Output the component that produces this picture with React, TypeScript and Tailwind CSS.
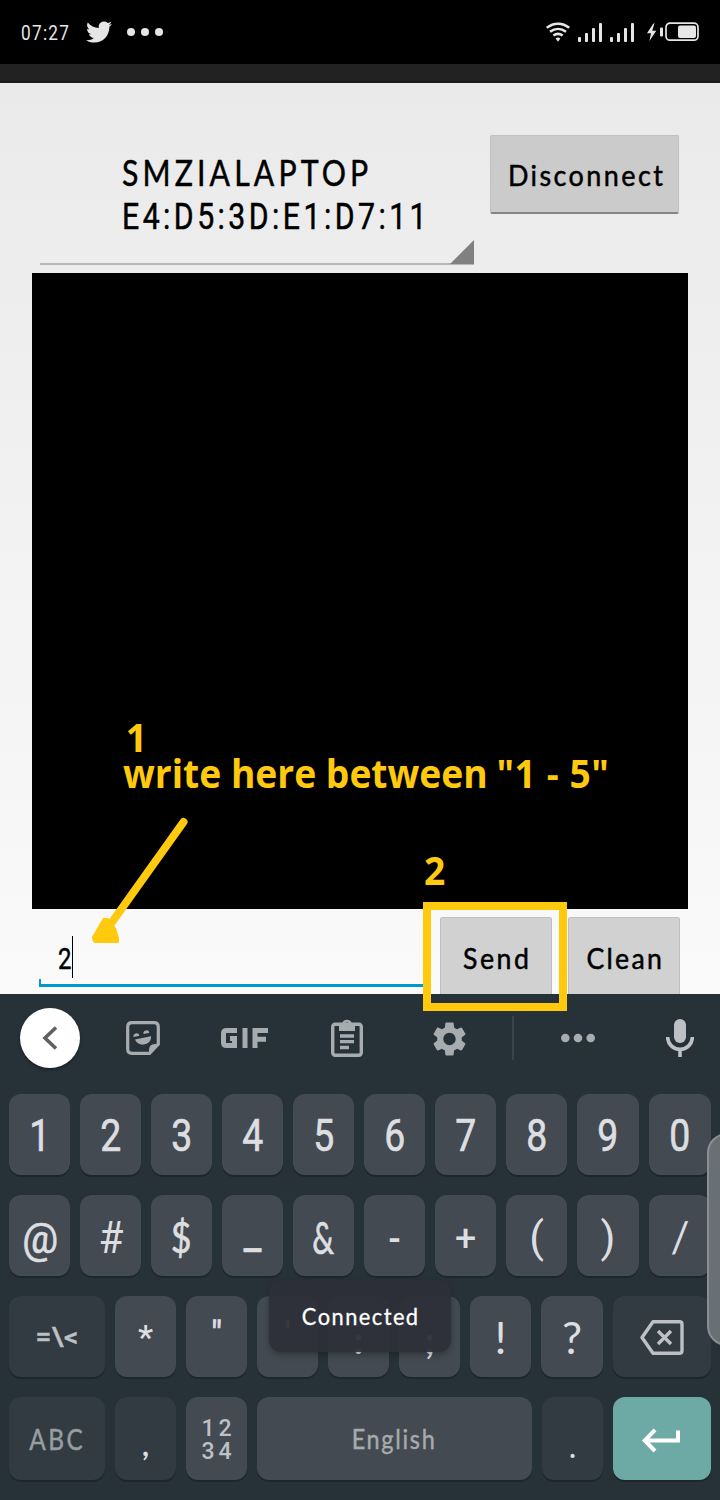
import React from "react";
import { FaTwitter } from "react-icons/fa";
import { MdSettings } from "react-icons/md";

function Glyph({ children, roboto = false, className = "" }: { children: React.ReactNode; roboto?: boolean; className?: string }) {
  return (
    <span className={`inline-block whitespace-pre ${roboto ? "font-['Roboto',sans-serif]" : "font-['Lato','Noto_Sans',sans-serif]"} leading-none ${className}`}>
      {children}
    </span>
  );
}

function Key({ children, dark = false }: { children?: React.ReactNode; dark?: boolean }) {
  return (
    <div className={`flex h-full min-w-0 items-center justify-center rounded-[12px] shadow-[0_2px_0_#1d262c] ${dark ? "bg-[#313b41]" : "bg-[#434a51]"}`}>
      {children}
    </div>
  );
}

function Signal() {
  return (
    <svg width="25" height="20" viewBox="0 0 25 20" fill="#e6e6e6">
      <rect x="0" y="14" width="3" height="5" rx="1" />
      <rect x="7" y="10" width="3" height="9" rx="1" />
      <rect x="14" y="5" width="3" height="14" rx="1" />
      <rect x="21" y="0" width="3" height="19" rx="1" />
    </svg>
  );
}

function StatusBar() {
  return (
    <div className="flex h-16 items-center bg-black pl-5 pr-[21px]">
      <Glyph roboto className="ml-px w-[65px] origin-left pt-px text-[20px] tracking-[1.5px] text-[#e6e6e6] scale-x-[0.86]">07:27</Glyph>
      <FaTwitter className="h-[26px] w-[26px]" color="#e6e6e6" />
      <svg className="ml-[15px]" width="38" height="10" viewBox="0 0 38 10" fill="#e6e6e6">
        <circle cx="4" cy="5" r="4" />
        <circle cx="18" cy="5" r="4" />
        <circle cx="32" cy="5" r="4" />
      </svg>
      <div className="ml-auto flex items-center">
        <svg width="24" height="20" viewBox="0 0 24 20" fill="none" stroke="#e6e6e6" strokeWidth="2.5">
          <path d="M.8 5.8C7.500.300 16.500.300 23.200 5.800" />
          <path d="M4 9.800c4.900-3.900 11.100-3.900 16 0" />
          <path d="M7.400 13.600c2.900-2.200 6.300-2.200 9.200 0" />
          <path d="M9.600 16.600q2.400-2 4.800 0L12 19.800z" fill="#e6e6e6" stroke="none" />
        </svg>
        <div className="ml-2 mt-px"><Signal /></div>
        <div className="ml-[7px] mt-px"><Signal /></div>
        <svg className="ml-3" width="52" height="20" viewBox="0 0 52 20">
          <path d="M6 2 0 11.300h4L2.400 19 9.300 8.800H5.200L7.600 1z" fill="#e6e6e6" />
          <rect x="13" y="5.500" width="3" height="9" rx="1" fill="#e6e6e6" />
          <rect x="19" y="1.200" width="32" height="17" rx="4" fill="none" stroke="#e6e6e6" strokeWidth="1.700" />
          <rect x="31" y="3.500" width="18" height="12.500" rx="2" fill="#e6e6e6" />
        </svg>
      </div>
    </div>
  );
}

function Toolbar() {
  return (
    <div className="flex h-[88px] items-center">
      <div className="w-[103px] pl-5">
        <div className="flex h-[60px] w-[60px] items-center justify-center rounded-full bg-white shadow-[0_2px_3px_#1a2227]">
          <svg width="16" height="24" viewBox="0 0 16 24" fill="none" stroke="#606060" strokeWidth="3.600">
            <path d="M14 1.500 3 12l11 10.500" />
          </svg>
        </div>
      </div>
      <div className="flex w-20 justify-center">
        <svg width="34" height="34" viewBox="0 0 34 34">
          <path d="M6 1.700h22q4.300 0 4.300 4.300v17L23.500 32.300H6Q1.700 32.300 1.700 28V6Q1.700 1.700 6 1.700z" fill="none" stroke="#a7acaf" strokeWidth="3.200" />
          <path d="M23 33.500V29q0-6 6-6h4.500z" fill="#a7acaf" />
          <path d="M9 18.500 25 15.300c.5 5-3.300 8-7.500 8.300-4 .3-7-1.700-8.500-5.100zM7.500 16a3 3 0 0 1 5.900-1.200zM17.500 13a3 3 0 0 1 5.900-1.200z" fill="#a7acaf" />
        </svg>
      </div>
      <div className="flex w-[122px] justify-center">
        <svg width="47" height="20" viewBox="0 0 47 20" fill="none" stroke="#a7acaf" strokeWidth="5">
          <path d="M16 2.500H5.500q-3 0-3 3v9q0 3 3 3h8V10.500H9M24 0v20M34 20V2.500h13M34 11.300h11" />
        </svg>
      </div>
      <div className="flex w-[84px] justify-center">
        <svg width="32" height="38" viewBox="0 0 32 38">
          <rect x="1.700" y="5.200" width="28.600" height="31" rx="2.500" fill="none" stroke="#a7acaf" strokeWidth="3.400" />
          <path fillRule="evenodd" d="M8 4h3.300a5 5 0 0 1 9.400 0H24v8H8zM16 3.200a2 2 0 1 0 0 4 2 2 0 0 0 0-4z" fill="#a7acaf" />
          <path d="M9 17h14M9 22.700h14M9 28.500h9" stroke="#a7acaf" strokeWidth="3.300" />
        </svg>
      </div>
      <div className="flex w-[121px] justify-center">
        <MdSettings className="mt-[2px] h-[42px] w-[41px]" color="#a7acaf" />
      </div>
      <div className="flex w-[6px] justify-center"><div className="h-11 w-[2px] bg-[#3a444a]" /></div>
      <div className="flex w-[124px] justify-center">
        <svg width="34" height="10" viewBox="0 0 34 10" fill="#a7acaf">
          <circle cx="4.300" cy="5" r="4.300" />
          <circle cx="17" cy="5" r="4.300" />
          <circle cx="29.700" cy="5" r="4.300" />
        </svg>
      </div>
      <div className="flex w-20 justify-center">
        <svg width="28" height="38" viewBox="0 0 28 38">
          <rect x="8" y="0" width="12" height="24" rx="6" fill="#bdc0c4" />
          <path d="M1.700 18v.5a12.300 11.800 0 0 0 24.600 0V18M14 30v8" fill="none" stroke="#bdc0c4" strokeWidth="3.600" />
        </svg>
      </div>
    </div>
  );
}

const sym = "text-[#dddee0] [-webkit-text-stroke:0.7px_#dddee0]";
const thin = "text-[#dddee0]";

function Keyboard() {
  return (
    <div className="h-[506px] bg-[#273238]">
      <Toolbar />
      <div className="mt-3 flex flex-col gap-5 px-[9px]">
        <div className="grid h-[81px] grid-cols-[repeat(8,61px)_62px_62px] gap-[10px]">
          {["1", "2", "3", "4", "5", "6", "7", "8", "9", "0"].map((d) => (
            <Key key={d}><Glyph roboto className={`${sym} mt-[2px] text-[45px] scale-x-[0.83]`}>{d}</Glyph></Key>
          ))}
        </div>
        <div className="grid h-[81px] grid-cols-[repeat(8,61px)_62px_62px] gap-[10px]">
          <Key><Glyph roboto className={`${sym} ml-[2px] mt-[6px] text-[43px] scale-x-[0.93]`}>@</Glyph></Key>
          <Key><Glyph roboto className={`${thin} mt-[3px] text-[45px] scale-x-[0.9]`}>#</Glyph></Key>
          <Key><Glyph className={`${sym} mt-[2px] text-[42px] scale-x-[0.85]`}>$</Glyph></Key>
          <Key><Glyph className={`${sym} -mt-[14px] text-[44px] font-bold`}>_</Glyph></Key>
          <Key><Glyph className={`${sym} mt-[3px] text-[45px] scale-x-[0.68]`}>&amp;</Glyph></Key>
          <Key><Glyph className={`${thin} mt-[2px] text-[36px] font-bold`}>-</Glyph></Key>
          <Key><Glyph className={`${thin} text-[38px] font-bold`}>+</Glyph></Key>
          <Key><Glyph roboto className={`${thin} mt-[3px] text-[43px]`}>(</Glyph></Key>
          <Key><Glyph roboto className={`${thin} mt-[3px] text-[43px]`}>)</Glyph></Key>
          <Key><Glyph className={`${thin} text-[42px]`}>/</Glyph></Key>
        </div>
        <div className="grid h-[81px] grid-cols-[96px_repeat(6,61px)_62px_98px] gap-[10px]">
          <Key dark><Glyph roboto className="text-[26px] font-medium tracking-[0.5px] text-[#bdc0c4] [-webkit-text-stroke:0.4px_#bdc0c4] scale-x-[1.08]">=\&lt;</Glyph></Key>
          <Key><Glyph roboto className={`${thin} text-[34px] font-medium`}>*</Glyph></Key>
          <Key><Glyph roboto className={`${sym} -mt-[4px] text-[35px]`}>"</Glyph></Key>
          <Key><Glyph roboto className={`${sym} -mt-[4px] text-[35px]`}>'</Glyph></Key>
          <Key><Glyph className={`${thin} mt-[7px] text-[36px] font-bold`}>:</Glyph></Key>
          <Key><Glyph className={`${thin} mt-[7px] text-[36px] font-bold`}>;</Glyph></Key>
          <Key><Glyph className={`${thin} mt-[2px] text-[45px]`}>!</Glyph></Key>
          <Key><Glyph className={`${thin} mt-[2px] text-[45px]`}>?</Glyph></Key>
          <Key dark>
            <svg className="mt-[2px]" width="44" height="35" viewBox="0 0 44 35" fill="none" stroke="#bdc0c4" strokeWidth="3.400">
              <path d="M13 1.700h26.500q2.500 0 2.500 2.500v26.600q0 2.500-2.500 2.500H13L2 17.500z" strokeLinejoin="round" />
              <path d="m18 11 13 13M31 11 18 24" />
            </svg>
          </Key>
        </div>
        <div className="grid h-[83px] grid-cols-[96px_61px_61px_minmax(0,1fr)_61px_98px] gap-[10px]">
          <Key dark><Glyph className="text-[29px] tracking-[3px] text-[#989da0] [-webkit-text-stroke:0.5px_#989da0] scale-x-[0.84]">ABC</Glyph></Key>
          <Key dark><Glyph className={`${thin} mt-[10px] text-[30px] font-bold`}>,</Glyph></Key>
          <Key>
            <div className="mt-[3px] grid grid-cols-2 gap-x-[4px] font-['Roboto',sans-serif] text-[23px] font-medium leading-[23px] text-[#bdc0c4]">
              <span>1</span><span>2</span><span>3</span><span>4</span>
            </div>
          </Key>
          <Key><Glyph className="text-[26px] tracking-[1.900px] text-[#a8abad] [-webkit-text-stroke:0.4px_#a8abad] scale-x-[0.9]">English</Glyph></Key>
          <Key dark><Glyph className={`${thin} mt-[14px] text-[32px]`}>.</Glyph></Key>
          <div className="flex items-center justify-center rounded-[12px] bg-[#6eaaa5] shadow-[0_2px_0_#1d262c]">
            <svg className="-ml-[2px] mt-[3px]" width="38" height="25" viewBox="0 0 38 25" fill="none" stroke="#fff" strokeWidth="4">
              <path d="M13 1.800 2.700 12.500 13 23M3 12.500h33V2.500" />
            </svg>
          </div>
        </div>
      </div>
    </div>
  );
}

const label = "text-black [-webkit-text-stroke:0.5px_#000]";
const note = "font-['Open_Sans','Noto_Sans',sans-serif] text-[40px] font-bold leading-[36px] text-[#ffc90e]";

export default function App() {
  return (
    <div className="relative flex h-[1500px] w-[720px] flex-col overflow-hidden bg-black">
      <StatusBar />
      <div className="h-[19px] border-b-2 border-[#1c1a1b] bg-[#222]" />
      <div className="flex h-[911px] flex-col bg-linear-to-b from-[#eaeaea] to-[#fafafa]">
        <div className="flex h-[190px] pl-10">
          <div className="flex h-[182px] w-[434px] flex-col border-b-2 border-[#b5b5b5] pl-[82px] pt-[71px]">
            <Glyph className={`${label} h-[45px] origin-left self-start text-[36px] tracking-[4.900px] scale-x-[0.84]`}>SMZIALAPTOP</Glyph>
            <Glyph roboto className={`${label} h-[36px] origin-left self-start text-[36px] tracking-[4.100px] scale-x-[0.84]`}>E4:D5:3D:E1:D7:11</Glyph>
            <svg className="-mb-px ml-auto mt-auto shrink-0" width="24" height="24" viewBox="0 0 24 24"><path d="M24 0v24H0z" fill="#808080" /></svg>
          </div>
          <div className="ml-4 mt-[52px] flex h-[79px] w-[189px] items-center justify-center rounded-[2px] border border-b-2 border-[#c0c0c0] border-b-[#858585] bg-[#cbcbcb]">
            <Glyph className={`${label} ml-[4px] text-[29px] tracking-[2.600px] scale-x-[0.93]`}>Disconnect</Glyph>
          </div>
        </div>
        <div className="mx-8 h-[636px] bg-black" />
        <div className="flex h-[85px] overflow-hidden pl-10">
          <div className="flex h-[78px] w-[385px] shrink-0 flex-col">
            <div className="flex h-[70px] items-start pl-[18px] pt-[27px]">
              <Glyph roboto className={`${label} mt-[8px] w-[14px] origin-left text-[30px] scale-x-[0.8]`}>2</Glyph>
              <div className="h-[42px] w-px bg-black" />
            </div>
            <div className="-mx-px h-[8px] border-x-2 border-b-[3px] border-[#0099cc]" />
          </div>
          <div className="ml-[15px] mt-[8px] flex h-[90px] w-[112px] shrink-0 justify-center rounded-[2px] border border-[#c0c0c0] bg-[#d1d1d1] pt-[25px]">
            <Glyph className={`${label} ml-[2px] text-[29px] tracking-[2.800px] scale-x-[0.92]`}>Send</Glyph>
          </div>
          <div className="ml-4 mt-[8px] flex h-[90px] w-[112px] shrink-0 justify-center rounded-[2px] border border-[#c0c0c0] bg-[#d1d1d1] pt-[25px]">
            <Glyph className={`${label} ml-[2px] text-[29px] tracking-[2.500px] scale-x-[0.92]`}>Clean</Glyph>
          </div>
        </div>
      </div>
      <Keyboard />

      <div className="absolute left-[269px] top-[1280px] flex h-[72px] w-[182px] items-center justify-center rounded-[12px] bg-[#2d2f38]/95 shadow-[0_3px_6px_#0004]">
        <Glyph className="ml-[2px] text-[24px] tracking-[1.600px] text-white [-webkit-text-stroke:0.3px_#fff] scale-x-[0.91]">Connected</Glyph>
      </div>
      <div className="absolute left-[707px] top-[1133px] h-[213px] w-[40px] rounded-[22px] border-2 border-[#8b8f90] bg-[#6c7476]/95" />

      <div className={`absolute left-[123px] top-[719px] ${note}`}>
        <div className="origin-left whitespace-pre pl-[3px] scale-x-[0.93]">1</div>
        <div className="origin-left whitespace-pre scale-x-[0.93]">write here between <span className="-ml-px tracking-[0.600px]">"1 - 5"</span></div>
      </div>
      <div className={`absolute left-[424px] top-[852px] origin-left scale-x-[0.93] ${note}`}>2</div>
      <svg className="absolute left-[90px] top-[815px]" width="100" height="130" viewBox="0 0 100 130">
        <path d="M93.500 7 20 110" stroke="#ffc90e" strokeWidth="8" strokeLinecap="round" />
        <path d="M13 103h5l8 10 3 10v3q0 2-1 2H5q-3-1-3-6z" fill="#ffc90e" />
      </svg>
      <div className="absolute left-[423px] top-[902px] h-[109px] w-[144px] border-8 border-[#ffc90e]" />
    </div>
  );
}
